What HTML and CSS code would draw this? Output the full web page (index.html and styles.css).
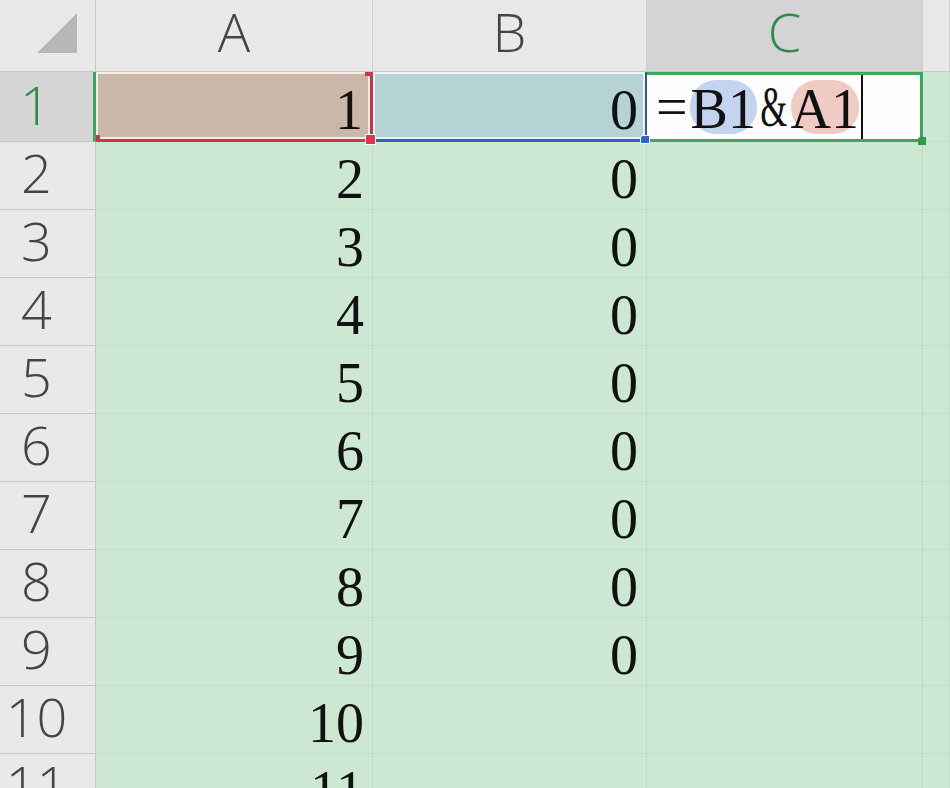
FILE: index.html
```html
<!DOCTYPE html>
<html lang="en">
<head>
<meta charset="utf-8">
<title>Sheet</title>
<link rel="stylesheet" href="styles.css">
</head>
<body>
<div class="sheet">
  <div class="corner"><svg class="corner-tri" width="96" height="72" viewBox="0 0 96 72"><polygon points="37,53 77,13 77,53" fill="#b7b7b7"/></svg></div>
  <div class="colhead"><span class="hl">A</span></div>
  <div class="colhead"><span class="hl">B</span></div>
  <div class="colhead colhead-sel"><span class="hl">C</span></div>
  <div class="colhead"></div>

  <div class="rowhead rowhead-sel">1</div>
  <div class="cell num a1">1<span class="mk mk-a-tr"></span><span class="mk mk-a-br"></span><span class="mk mk-a-bl"></span></div>
  <div class="cell num b1">0<span class="mk mk-b-br"></span></div>
  <div class="cell c1"><span class="eq">=</span><span class="ref ref-b">B1</span><span class="amp">&amp;</span><span class="ref ref-a">A1</span><span class="caret"></span><span class="mk mk-c-br"></span></div>
  <div class="cell"></div>

  <div class="rowhead">2</div><div class="cell num">2</div><div class="cell num">0</div><div class="cell"></div><div class="cell"></div>
  <div class="rowhead">3</div><div class="cell num">3</div><div class="cell num">0</div><div class="cell"></div><div class="cell"></div>
  <div class="rowhead">4</div><div class="cell num">4</div><div class="cell num">0</div><div class="cell"></div><div class="cell"></div>
  <div class="rowhead">5</div><div class="cell num">5</div><div class="cell num">0</div><div class="cell"></div><div class="cell"></div>
  <div class="rowhead">6</div><div class="cell num">6</div><div class="cell num">0</div><div class="cell"></div><div class="cell"></div>
  <div class="rowhead">7</div><div class="cell num">7</div><div class="cell num">0</div><div class="cell"></div><div class="cell"></div>
  <div class="rowhead">8</div><div class="cell num">8</div><div class="cell num">0</div><div class="cell"></div><div class="cell"></div>
  <div class="rowhead">9</div><div class="cell num">9</div><div class="cell num">0</div><div class="cell"></div><div class="cell"></div>
  <div class="rowhead">10</div><div class="cell num">10</div><div class="cell num"></div><div class="cell"></div><div class="cell"></div>
  <div class="rowhead">11</div><div class="cell num">11</div><div class="cell num"></div><div class="cell"></div><div class="cell"></div>
</div>
</body>
</html>
```

FILE: styles.css
```css
html, body {
  margin: 0;
  padding: 0;
  width: 950px;
  height: 788px;
  overflow: hidden;
  background: #cde8d2;
}

.sheet {
  display: grid;
  grid-template-columns: 96px 277px 274px 276px 1fr;
  grid-template-rows: 72px 70px repeat(10, 68px);
  width: 950px;
}

.corner,
.colhead,
.rowhead,
.cell {
  box-sizing: border-box;
}

.cell {
  overflow: hidden;
}

.corner {
  background: #e9e9e9;
  border-right: 1px solid #c6c6c6;
  border-bottom: 1px solid #c6c6c6;
}

.corner-tri {
  display: block;
}

.colhead {
  background: #e9e9e9;
  border-right: 1px solid #cfcfcf;
  border-bottom: 1px solid #c6c6c6;
  font-family: "Open Sans", "Liberation Sans", sans-serif;
  font-weight: 300;
  font-size: 54px;
  text-align: center;
  color: #454545;
  display: flex;
  justify-content: center;
  align-items: flex-start;
}

.hl {
  display: block;
  line-height: 74px;
  margin-top: -6px;
}

.colhead-sel {
  background: #d4d4d4;
  color: #2e8b4b;
}

.rowhead {
  background: #e9e9e9;
  border-right: 1px solid #c6c6c6;
  border-bottom: 1px solid #c6c6c6;
  font-family: "Open Sans", "Liberation Sans", sans-serif;
  font-weight: 300;
  font-size: 54px;
  line-height: 60px;
  text-align: center;
  padding-right: 22px;
  color: #454545;
}

.rowhead-sel {
  background: #d6d6d6;
  color: #2e8b4b;
  border-right: 3px solid #3ea85a;
  line-height: 64px;
}

.cell {
  position: relative;
  background: #cde8d2;
  border-right: 1px solid #bfdcc5;
  border-bottom: 1px solid #c2dec8;
  font-family: "Liberation Serif", "Times New Roman", serif;
  font-size: 56px;
  line-height: 74px;
  color: #111;
}

.num {
  text-align: right;
  padding-right: 8px;
}

.a1 {
  background: #c9b7a7;
  border-right: 3px solid #c8374d;
  border-bottom: 3px solid #c8374d;
  box-shadow: inset 0 0 0 2px #f6ecea;
  line-height: 76px;
  padding-right: 7px;
  overflow: visible;
}

.b1 {
  background: #b5d2d4;
  border-right: 2px solid #3656a8;
  border-bottom: 3px solid #2f63c6;
  box-shadow: inset 0 0 0 2px #eef4f6;
  line-height: 76px;
  padding-right: 7px;
  overflow: visible;
}

.c1 {
  background: #fdfefd;
  border-top: 3px solid #3ea85a;
  border-right: 3px solid #3ea85a;
  border-bottom: 3px solid #3ea85a;
  display: flex;
  align-items: center;
  padding-left: 9px;
  line-height: 60px;
  overflow: visible;
}

.eq {
  margin-right: 2px;
}

.ref {
  display: inline-block;
  border-radius: 26px;
  padding: 0 1px;
  height: 54px;
  line-height: 58px;
}

.ref-b {
  background: #c5d4ee;
}

.ref-a {
  background: #efcbc3;
  padding: 0;
}

.amp {
  display: inline-block;
  transform: scaleX(0.62);
  margin: 0 -5px;
}

.caret {
  display: inline-block;
  width: 2px;
  height: 64px;
  background: #111;
  margin-left: 2px;
}

.mk {
  position: absolute;
  display: block;
}

.mk-a-tr {
  top: 0;
  right: -3px;
  width: 8px;
  height: 4px;
  background: #c8374d;
}

.mk-a-br {
  bottom: -6px;
  right: -6px;
  width: 9px;
  height: 9px;
  background: #e0344f;
  border: 1px solid #fff;
  z-index: 2;
}

.mk-a-bl {
  bottom: -3px;
  left: 0;
  width: 4px;
  height: 7px;
  background: #c8374d;
}

.mk-b-br {
  bottom: -5px;
  right: -5px;
  width: 8px;
  height: 7px;
  background: #2f63c6;
  border-radius: 3px 0 0 0;
  border: 1px solid #fff;
  z-index: 2;
}

.mk-c-br {
  bottom: -6px;
  right: -6px;
  width: 8px;
  height: 8px;
  background: #2e9a4c;
  border-radius: 3px 0 0 0;
  z-index: 2;
}
```
